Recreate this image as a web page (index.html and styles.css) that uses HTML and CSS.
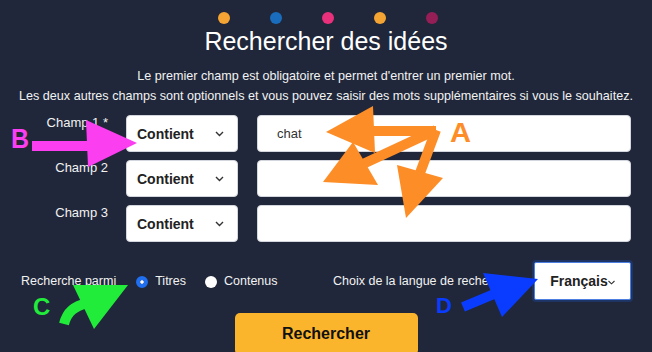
FILE: index.html
```html
<!DOCTYPE html>
<html lang="fr">
<head>
    <meta charset="UTF-8">
    <meta name="viewport" content="width=device-width, initial-scale=1.0">
    <title>Rechercher des idées</title>
    <link rel="stylesheet" href="styles.css">
</head>
<body>
    <div class="page">
        <!-- Coloured dots above the title -->
        <div class="dots">
            <span class="dot dot-orange"></span>
            <span class="dot dot-blue"></span>
            <span class="dot dot-pink"></span>
            <span class="dot dot-orange"></span>
            <span class="dot dot-plum"></span>
        </div>
        <h1 class="title">Rechercher des idées</h1>
        <p class="intro">Le premier champ est obligatoire et permet d'entrer un premier mot.<br>Les deux autres champs sont optionnels et vous pouvez saisir des mots supplémentaires si vous le souhaitez.</p>

        <form class="search-form">
            <div class="fields">
                <label class="field-label" for="q1">Champ 1 *</label>
                <div class="select-box"><span>Contient</span><svg class="chevron" width="9" height="6" viewBox="0 0 9 6"><path d="M1 1l3.5 3.5L8 1" fill="none" stroke="#333" stroke-width="1.4"/></svg></div>
                <input class="text-input" id="q1" type="text" value="chat">

                <label class="field-label" for="q2">Champ 2</label>
                <div class="select-box"><span>Contient</span><svg class="chevron" width="9" height="6" viewBox="0 0 9 6"><path d="M1 1l3.5 3.5L8 1" fill="none" stroke="#333" stroke-width="1.4"/></svg></div>
                <input class="text-input" id="q2" type="text">

                <label class="field-label" for="q3">Champ 3</label>
                <div class="select-box"><span>Contient</span><svg class="chevron" width="9" height="6" viewBox="0 0 9 6"><path d="M1 1l3.5 3.5L8 1" fill="none" stroke="#333" stroke-width="1.4"/></svg></div>
                <input class="text-input" id="q3" type="text">
            </div>

            <div class="options">
                <div class="scope">
                    <span>Recherche parmi</span>
                    <label class="radio"><span class="radio-dot checked"></span>Titres</label>
                    <label class="radio"><span class="radio-dot"></span>Contenus</label>
                </div>
                <div class="lang">
                    <span>Choix de la langue de recherche</span>
                    <div class="lang-select"><span>Français</span><svg class="lang-chevron" width="7" height="5" viewBox="0 0 7 5"><path d="M0.5 1l3 2.8L6.5 1" fill="none" stroke="#333" stroke-width="1.1"/></svg></div>
                </div>
            </div>

            <button class="submit" type="button">Rechercher</button>
        </form>
    </div>

    <!-- Annotation arrows drawn over the form -->
    <svg class="annotations" width="652" height="352" viewBox="0 0 652 352">
        <g fill="#fb3ff0">
            <rect x="32" y="141" width="57" height="10"/>
            <polygon points="86,120 137,143 88,167"/>
            <text x="11" y="148" font-size="27" font-weight="bold" textLength="18" lengthAdjust="spacingAndGlyphs">B</text>
        </g>
        <g fill="#fd8d26" stroke="none">
            <line x1="436" y1="131" x2="372" y2="131" stroke="#fd8d26" stroke-width="10"/>
            <polygon points="373,106 326,132 375,153"/>
            <line x1="436" y1="130" x2="363" y2="164" stroke="#fd8d26" stroke-width="10"/>
            <polygon points="353,142 323,182 378,185"/>
            <line x1="436" y1="130" x2="420" y2="173" stroke="#fd8d26" stroke-width="10"/>
            <polygon points="397,165 443,178 406,218"/>
            <text x="450" y="142" font-size="28" font-weight="bold" textLength="21" lengthAdjust="spacingAndGlyphs">A</text>
        </g>
        <g fill="#22ec3a">
            <path d="M64 324 C67 312 74 306 88 303" fill="none" stroke="#22ec3a" stroke-width="10"/>
            <polygon points="73,285 128,285 94,329"/>
            <text x="33" y="315" font-size="24" font-weight="bold">C</text>
        </g>
        <g fill="#0a3cff">
            <line x1="463" y1="307" x2="494" y2="294" stroke="#0a3cff" stroke-width="10"/>
            <polygon points="483,273 538,279 502,317"/>
            <text x="436" y="313" font-size="22" font-weight="bold">D</text>
        </g>
    </svg>
</body>
</html>
```

FILE: styles.css
```css
html, body {
    margin: 0;
    height: 100%;
    background-color: #20273a;
    font-family: "Liberation Sans", Arial, sans-serif;
    color: #f2f2f2;
}
body {
    position: relative;
    overflow: hidden;
}
.page {
    padding-top: 12px;
    text-align: center;
}
.dots {
    display: flex;
    justify-content: center;
    gap: 40px;
    padding-left: 4px;
}
.dot {
    width: 12px;
    height: 12px;
    border-radius: 50%;
}
.dot-orange { background-color: #f3a433; }
.dot-blue { background-color: #1a6dbd; }
.dot-pink { background-color: #e8307b; }
.dot-plum { background-color: #951e56; }
.title {
    margin: 3px 0 0;
    font-size: 25px;
    font-weight: normal;
    line-height: 28px;
    color: #fff;
}
.intro {
    margin: 12px 0 0;
    font-size: 12.6px;
    line-height: 19.5px;
}
.search-form {
    margin-top: 9px;
    padding: 0 21px;
}
.fields {
    display: grid;
    grid-template-columns: 87px 112px 1fr;
    grid-auto-rows: 37px;
    gap: 8px 18px;
}
.field-label {
    text-align: right;
    font-size: 13px;
    line-height: 15px;
}
.select-box {
    display: flex;
    justify-content: space-between;
    align-items: center;
    padding: 0 13px 0 10px;
    background-color: #fff;
    border: 1px solid #d3d6dc;
    border-radius: 4px;
    color: #222;
    font-size: 14px;
    font-weight: bold;
}
.text-input {
    margin-left: 1px;
    padding: 0 0 0 19px;
    border: 1px solid #d3d6dc;
    border-radius: 4px;
    background-color: #fff;
    font-family: inherit;
    font-size: 13px;
    color: #333;
    outline: none;
}
.options {
    display: flex;
    align-items: center;
    margin-top: 20px;
    font-size: 12.5px;
}
.scope {
    flex: 0 0 312px;
    display: flex;
    align-items: center;
    text-align: left;
}
.radio {
    display: flex;
    align-items: center;
    margin-left: 20px;
}
.radio + .radio {
    margin-left: 19px;
}
.radio-dot {
    width: 12px;
    height: 12px;
    margin: 2px 7px 0 0;
    border-radius: 50%;
    background-color: #fff;
    box-sizing: border-box;
}
.radio-dot.checked {
    border: 4px solid #1f6ff0;
    background-clip: content-box;
    background-color: #fff;
}
.lang {
    flex: 1;
    display: flex;
    align-items: center;
    justify-content: space-between;
}
.lang-select {
    display: flex;
    justify-content: center;
    align-items: center;
    width: 95px;
    height: 36px;
    background-color: #fff;
    border: 1px solid #4d7fe0;
    border-radius: 2px;
    box-shadow: 0 0 0 2px #1d3464;
    color: #222;
    font-size: 14px;
    font-weight: bold;
}
.lang-chevron {
    margin-top: 3px;
}
.submit {
    display: block;
    width: 183px;
    height: 42px;
    margin: 13px auto 0;
    border: none;
    border-radius: 5px;
    background-color: #fbb52d;
    font-family: inherit;
    font-size: 16px;
    font-weight: bold;
    color: #111;
}
.annotations {
    position: absolute;
    top: 0;
    left: 0;
    pointer-events: none;
    font-family: "Liberation Sans", Arial, sans-serif;
}
```
